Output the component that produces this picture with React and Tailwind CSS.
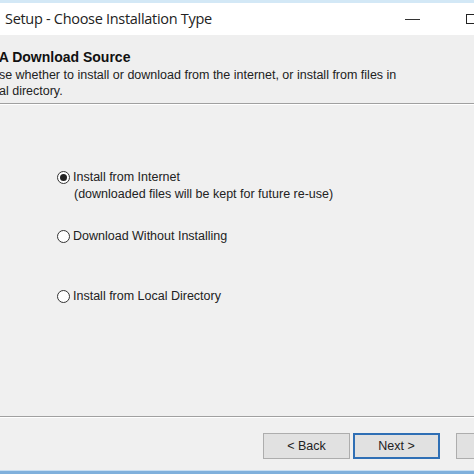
import React from "react";

function Radio({ checked }) {
  return (
    <span className="w-[13px] h-[13px] rounded-full border border-[#333] bg-white flex items-center justify-center shrink-0">
      {checked && <span className="w-[7px] h-[7px] rounded-full bg-[#222]" />}
    </span>
  );
}

function Option({ checked, label, note, className }) {
  return (
    <div className={"flex items-start gap-[3px] " + (className || "")}>
      <div className="h-[16px] flex items-center">
        <Radio checked={checked} />
      </div>
      <div className="leading-[17px] text-[#222]">
        <div>{label}</div>
        {note && <div className="pl-[1px]">{note}</div>}
      </div>
    </div>
  );
}

export default function App() {
  return (
    <div className="w-[474px] h-[474px] overflow-hidden flex flex-col bg-[#f0f0f0] font-['Liberation_Sans',Arial,sans-serif] text-[12.5px]">
      {/* window frame top */}
      <div className="h-[3px] bg-[#d3e8f6]" />

      {/* title bar */}
      <div className="h-[32px] bg-white flex items-center pl-[5px] font-['Open_Sans',sans-serif]">
        <span className="text-[14.5px] text-[#222] tracking-[-0.3px]">
          Setup - Choose Installation Type
        </span>
        <span className="ml-auto mr-[46px] w-[15px] h-[1px] bg-[#333]" />
        <span className="w-[10px] h-[10px] border border-[#222] mr-[-2px]" />
      </div>

      {/* header */}
      <div className="h-[69px] bg-[#efefef] border-b border-[#a0a0a0] overflow-hidden pt-[13px]">
        <div className="ml-[-56px] font-bold text-[14px] leading-[18px] text-[#111] whitespace-nowrap">
          Choose A Download Source
        </div>
        <div className="ml-[-31px] leading-[16px] mt-[1px] text-[#222] whitespace-nowrap">
          Choose whether to install or download from the internet, or install from files in
        </div>
        <div className="ml-[-17px] leading-[16px] text-[#222] whitespace-nowrap">
          local directory.
        </div>
      </div>
      <div className="h-[1px] bg-white" />

      {/* options */}
      <div className="flex-1 pl-[57px] pt-[64px]">
        <Option
          checked
          label="Install from Internet"
          note="(downloaded files will be kept for future re-use)"
        />
        <Option className="mt-[25px]" label="Download Without Installing" />
        <Option className="mt-[43px]" label="Install from Local Directory" />
      </div>

      {/* footer */}
      <div className="h-[1px] bg-[#a0a0a0]" />
      <div className="h-[1px] bg-white" />
      <div className="h-[52px] flex items-start pt-[15px] pl-[263px] gap-[3px] text-[#222]">
        <button className="w-[87px] h-[26px] shrink-0 bg-[#e1e1e1] border border-[#adadad]">
          &lt; Back
        </button>
        <button className="w-[87px] h-[26px] shrink-0 bg-[#e1e1e1] border-2 border-[#2f6fb5]">
          Next &gt;
        </button>
        <button className="ml-[13px] w-[87px] h-[26px] shrink-0 bg-[#e1e1e1] border border-[#adadad]">
          Cancel
        </button>
      </div>
      <div className="h-[1px] bg-[#c6def2]" />
      <div className="h-[3px] bg-[#7fb0dc]" />
    </div>
  );
}
